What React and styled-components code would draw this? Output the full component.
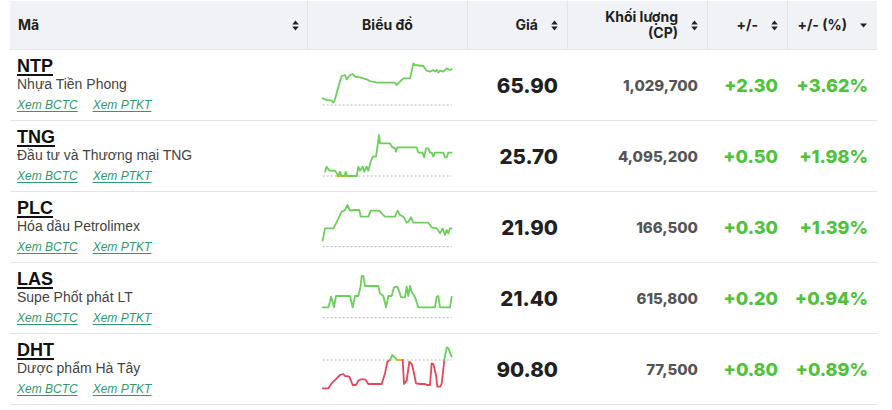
import React from "react";
import styled, { createGlobalStyle } from "styled-components";

const GREEN = "#6dcf5b";
const RED = "#e8445a";
const YELLOW = "#f2b90f";

const Global = createGlobalStyle`
  html, body { margin: 0; padding: 0; background: #fff; }
  body { font-family: "Liberation Sans", Arial, sans-serif; }
`;

const Page = styled.div`
  padding: 1px 15px 0 10px;
  width: 867px;
`;

const Table = styled.div`
  display: grid;
  grid-template-columns: 297px 160px 100px 140px 80px 90px;
  width: 867px;
`;

const Head = styled.div`
  height: 49px;
  background: #f0f2f5;
  border-bottom: 1px solid #e3e5e8;
  border-left: ${(p) => (p.$first ? "none" : "1px solid #e1e4e8")};
  display: flex;
  align-items: center;
  justify-content: ${(p) => p.$justify || "flex-end"};
  gap: ${(p) => p.$gap || 13}px;
  padding: 0 ${(p) => p.$pr ?? 9}px 0 ${(p) => p.$pl ?? 8}px;
  box-sizing: border-box;
  font-family: Inter, "Liberation Sans", sans-serif;
  font-weight: 700;
  font-size: 14px;
  color: #222;
  line-height: 16px;
  text-align: right;
`;

const HeadLabel = styled.span`
  flex: none;
  text-align: ${(p) => p.$align || "right"};
`;

const Cell = styled.div`
  height: 71px;
  box-sizing: border-box;
  border-bottom: 1px solid #e4e4e4;
  display: flex;
  align-items: center;
  justify-content: ${(p) => p.$justify || "flex-end"};
  padding: 0 ${(p) => p.$pr ?? 9}px 0 ${(p) => p.$pl ?? 0}px;
`;

const InfoCell = styled(Cell)`
  flex-direction: column;
  align-items: flex-start;
  justify-content: center;
  padding: 0 0 0 7px;
`;

const Symbol = styled.a`
  font-family: "Liberation Sans", Arial, sans-serif;
  font-weight: 700;
  font-size: 18px;
  line-height: 20px;
  color: #111;
  text-decoration: underline;
  text-decoration-thickness: 2px;
  text-underline-offset: 2px;
`;

const Name = styled.div`
  font-size: 14px;
  line-height: 17px;
  color: #444;
`;

const Links = styled.div`
  display: flex;
  gap: 15px;
  margin-top: 2px;
  line-height: 20px;
`;

const Link = styled.a`
  font-size: 12px;
  font-style: italic;
  color: #329a6a;
  text-decoration: underline;
  text-underline-offset: 2px;
`;

const Value = styled.span`
  font-family: Inter, "Liberation Sans", sans-serif;
  font-weight: ${(p) => p.$weight || 800};
  font-size: ${(p) => p.$size}px;
  color: ${(p) => p.$color};
`;

const SortIcon = () => (
  <svg width="7" height="11" viewBox="0 0 7 11">
    <path d="M3.5 0.5 L6.8 4.5 L0.2 4.5 Z M3.5 10.5 L6.8 6.5 L0.2 6.5 Z" fill="#222" />
  </svg>
);

const CaretIcon = () => (
  <svg width="7" height="5" viewBox="0 0 7 5">
    <path d="M0 0.5 L7 0.5 L3.5 4.5 Z" fill="#222" />
  </svg>
);

function Sparkline({ c }) {
  const tx = (X) => c.ox + X / 3 - 317;
  const ty = (Y) => c.oy + Y / 3 - c.top - 5;
  const refY = ty(c.ref);
  return (
    <svg width="140" height="60" viewBox="0 0 140 60">
      <line
        x1={tx(68)}
        x2={tx(455)}
        y1={refY}
        y2={refY}
        stroke="#b5b5b5"
        strokeWidth="1"
        strokeDasharray="2 2"
      />
      {c.segs.map((s, i) => (
        <polyline
          key={i}
          points={s.p.map(([X, Y]) => `${tx(X).toFixed(2)},${ty(Y).toFixed(2)}`).join(" ")}
          fill="none"
          stroke={s.c}
          strokeWidth="1.8"
          strokeLinejoin="round"
          strokeLinecap="round"
        />
      ))}
    </svg>
  );
}

const rows = [
  {
    sym: "NTP",
    name: "Nhựa Tiền Phong",
    price: "65.90",
    vol: "1,029,700",
    chg: "+2.30",
    pct: "+3.62%",
    chart: {
      ox: 300, oy: 0, top: 50, ref: 315,
      segs: [
        {
          c: GREEN,
          p: [[68,295],[80,300],[95,302],[100,308],[105,298],[118,250],[125,228],[135,225],[140,238],[150,225],[158,222],[165,230],[180,232],[200,238],[210,243],[230,248],[285,248],[290,255],[300,245],[310,235],[330,235],[340,190],[345,195],[370,198],[380,212],[390,215],[400,210],[405,215],[410,210],[415,218],[420,212],[430,215],[440,205],[448,210],[455,208]],
        },
      ],
    },
  },
  {
    sym: "TNG",
    name: "Đầu tư và Thương mại TNG",
    price: "25.70",
    vol: "4,095,200",
    chg: "+0.50",
    pct: "+1.98%",
    chart: {
      ox: 300, oy: 120, top: 121, ref: 168,
      segs: [
        { c: YELLOW, p: [[112,168],[170,168]] },
        {
          c: GREEN,
          p: [[75,155],[80,140],[88,152],[105,152],[110,160],[115,168],[120,155],[125,168],[133,168],[137,155],[142,168],[170,168],[175,140],[180,152],[188,140],[193,155],[200,140],[205,152],[212,125],[218,110],[228,110],[233,75],[237,45],[240,70],[270,70],[275,80],[285,85],[288,95],[292,82],[350,82],[355,98],[368,98],[372,112],[378,85],[385,85],[390,98],[395,98],[400,110],[404,98],[430,98],[435,112],[440,112],[445,98],[455,98]],
        },
      ],
    },
  },
  {
    sym: "PLC",
    name: "Hóa dầu Petrolimex",
    price: "21.90",
    vol: "166,500",
    chg: "+0.30",
    pct: "+1.39%",
    chart: {
      ox: 300, oy: 120, top: 192, ref: 380,
      segs: [
        {
          c: GREEN,
          p: [[68,362],[75,325],[100,325],[108,310],[125,275],[135,270],[142,255],[150,272],[160,270],[178,270],[182,290],[205,290],[212,272],[238,272],[245,280],[255,290],[285,290],[293,272],[300,285],[310,290],[320,308],[325,305],[333,292],[340,308],[385,308],[395,322],[410,325],[420,340],[428,325],[435,345],[440,330],[445,340],[450,325],[455,325]],
        },
      ],
    },
  },
  {
    sym: "LAS",
    name: "Supe Phốt phát LT",
    price: "21.40",
    vol: "615,800",
    chg: "+0.20",
    pct: "+0.94%",
    chart: {
      ox: 300, oy: 260, top: 263, ref: 173,
      segs: [
        {
          c: GREEN,
          p: [[68,142],[85,142],[90,125],[93,110],[98,125],[102,142],[108,108],[150,108],[158,142],[165,108],[175,108],[182,78],[185,48],[190,48],[195,78],[235,78],[240,100],[250,108],[258,142],[265,108],[275,108],[282,82],[292,80],[298,95],[303,112],[315,112],[320,80],[325,108],[330,78],[335,95],[345,112],[355,142],[405,142],[410,110],[415,108],[420,142],[450,142],[455,110]],
        },
      ],
    },
  },
  {
    sym: "DHT",
    name: "Dược phẩm Hà Tây",
    price: "90.80",
    vol: "77,500",
    chg: "+0.80",
    pct: "+0.89%",
    chart: {
      ox: 300, oy: 260, top: 334, ref: 300,
      segs: [
        { c: RED, p: [[68,385],[85,385],[95,370],[110,355],[120,345],[130,342],[135,348],[148,350],[158,375],[168,375],[175,362],[182,358],[195,358],[205,372],[245,372],[255,340],[262,305],[270,300]] },
        { c: GREEN, p: [[270,300],[277,285],[285,293],[292,300]] },
        { c: YELLOW, p: [[292,300],[308,300]] },
        { c: RED, p: [[308,300],[312,372],[320,362],[328,305],[335,312],[340,330],[348,370],[360,372],[375,372],[380,375],[390,375],[395,310],[400,312],[408,345],[412,380],[420,380],[425,372],[433,300]] },
        { c: GREEN, p: [[433,300],[440,262],[445,265],[455,290]] },
      ],
    },
  },
];

export default function App() {
  return (
    <Page>
      <Global />
      <Table>
        <Head $first $justify="space-between" $pl={8} $pr={8}>
          <HeadLabel $align="left">Mã</HeadLabel>
          <SortIcon />
        </Head>
        <Head $justify="center" $pl={0} $pr={0}>
          <HeadLabel $align="center">Biểu đồ</HeadLabel>
        </Head>
        <Head>
          <HeadLabel>Giá</HeadLabel>
          <SortIcon />
        </Head>
        <Head>
          <HeadLabel>
            Khối lượng
            <br />
            (CP)
          </HeadLabel>
          <SortIcon />
        </Head>
        <Head>
          <HeadLabel>+/-</HeadLabel>
          <SortIcon />
        </Head>
        <Head $gap={13} $pr={10}>
          <HeadLabel>+/- (%)</HeadLabel>
          <CaretIcon />
        </Head>

        {rows.map((r) => (
          <React.Fragment key={r.sym}>
            <InfoCell>
              <Symbol href="#">{r.sym}</Symbol>
              <Name>{r.name}</Name>
              <Links>
                <Link href="#">Xem BCTC</Link>
                <Link href="#">Xem PTKT</Link>
              </Links>
            </InfoCell>
            <Cell $justify="center" $pr={0}>
              <Sparkline c={r.chart} />
            </Cell>
            <Cell $pr={9}>
              <Value $size={20.5} $color="#1f1f24">{r.price}</Value>
            </Cell>
            <Cell $pr={9}>
              <Value $size={15} $weight={800} $color="#555">{r.vol}</Value>
            </Cell>
            <Cell $pr={9}>
              <Value $size={18} $color="#4ec23b">{r.chg}</Value>
            </Cell>
            <Cell $pr={9}>
              <Value $size={18} $color="#4ec23b">{r.pct}</Value>
            </Cell>
          </React.Fragment>
        ))}
      </Table>
    </Page>
  );
}
